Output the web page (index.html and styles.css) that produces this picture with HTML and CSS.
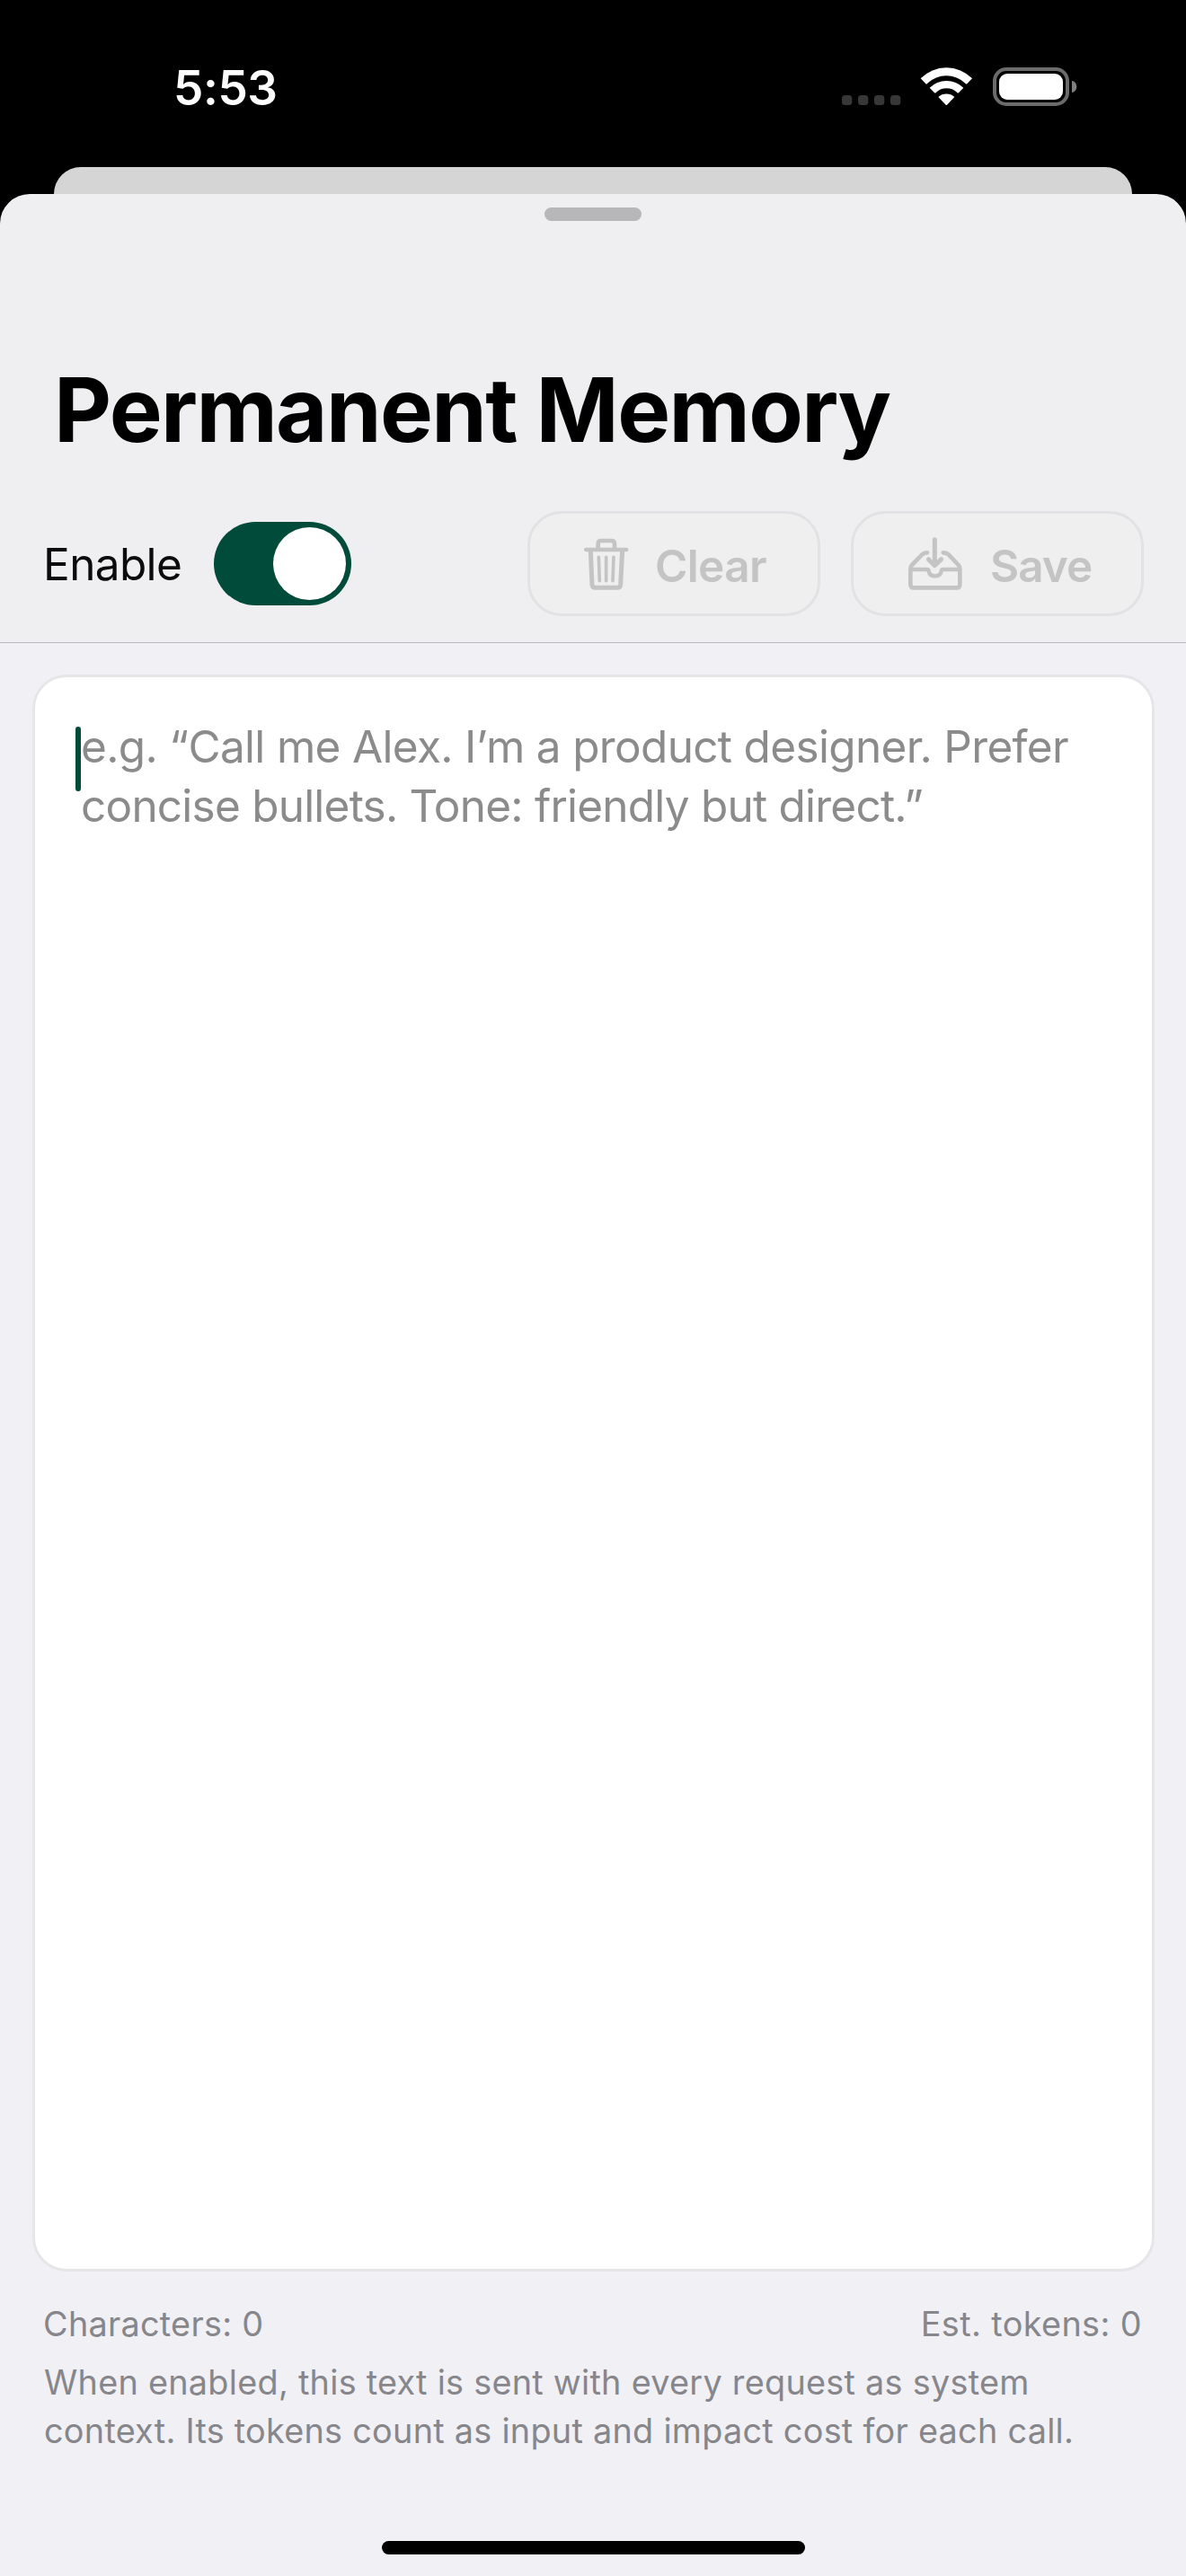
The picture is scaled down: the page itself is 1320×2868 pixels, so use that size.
FILE: index.html
```html
<!DOCTYPE html>
<html lang="en">
<head>
<meta charset="utf-8">
<title>Permanent Memory</title>
<link rel="stylesheet" href="styles.css">
</head>
<body>
<div class="screen">
  <header class="status-bar">
    <span class="time">5:53</span>
    <div class="status-icons">
      <svg class="cellular" width="66" height="45" viewBox="0 0 66 45" fill="#373737">
        <rect x="0" y="32" width="11.3" height="11" rx="3.5"/>
        <rect x="18" y="32" width="11.3" height="11" rx="3.5"/>
        <rect x="36" y="32" width="11.3" height="11" rx="3.5"/>
        <rect x="54" y="32" width="11.3" height="11" rx="3.5"/>
      </svg>
      <svg class="wifi" width="59" height="45" viewBox="372 72 177 135" fill="#fff">
        <path d="M374 112A121 121 0 0 1 546 112L529 130Q526 132 523 128A92 92 0 0 0 397 128Q394 132 391 130Z"/>
        <path d="M404 143A80 80 0 0 1 517 143L501 160Q498 162 495 158A51 51 0 0 0 426 158Q423 162 420 160Z"/>
        <path d="M433 174A40 40 0 0 1 487 174L462 200Q460 202 458 200Z"/>
      </svg>
      <svg class="battery" width="94" height="45" viewBox="0 0 94 45">
        <rect x="2" y="3" width="81" height="39" rx="13" fill="none" stroke="#6b6b6b" stroke-width="4"/>
        <rect x="7" y="8" width="71" height="29" rx="9" fill="#fff"/>
        <path d="M88 15.7Q93.3 17.5 93.3 22.5T88 29.3Z" fill="#808080"/>
      </svg>
    </div>
  </header>

  <div class="back-sheet"></div>

  <main class="sheet">
    <div class="grabber"></div>
    <h1 class="title">Permanent Memory</h1>

    <div class="toolbar">
      <span class="enable-label">Enable</span>
      <div class="toggle"><div class="knob"></div></div>
      <div class="actions">
        <div class="button button-clear">
          <svg class="icon" width="53.3" height="60.7" viewBox="265 142 160 182" fill="none" stroke="currentColor" stroke-linecap="round" stroke-linejoin="round">
            <path d="M277 184H413" stroke-width="13"/>
            <path d="M318 182V164Q318 154 328 154H363Q373 154 373 164V182" stroke-width="14"/>
            <path d="M293 188L298 301Q299 311 309 311H382Q392 311 393 301L399 188" stroke-width="15"/>
            <path d="M320 209L323 288M345 209V288M370 209L367 288" stroke-width="11"/>
          </svg>
          <span class="button-label clear-label">Clear</span>
        </div>
        <div class="button button-save">
          <svg class="icon" width="64" height="62" viewBox="267 140 192 186" fill="none" stroke="currentColor" stroke-linecap="round" stroke-linejoin="round" stroke-width="15">
            <path d="M361 151V236M340 217L361 238L383 217"/>
            <path d="M336 195Q326 194 318 202L285 236Q280 241 280 250V301Q280 312 291 312H434Q445 312 445 301V250Q445 241 440 236L408 202Q400 194 389 195" stroke-width="14"/>
            <path d="M283 251H335Q341 251 341 257Q344 273 362 273T383 257Q383 251 389 251H442" stroke-width="13"/>
          </svg>
          <span class="button-label save-label">Save</span>
        </div>
      </div>
    </div>

    <div class="editor">
      <div class="caret"></div>
      <p class="placeholder">
        <span class="line line-one">e.g. “Call me Alex. I’m a product designer. Prefer</span>
        <span class="line line-two">concise bullets. Tone: friendly but direct.”</span>
      </p>
    </div>

    <footer class="footer">
      <div class="counts">
        <span>Characters: 0</span>
        <span class="tokens">Est. tokens: 0</span>
      </div>
      <p class="note">When enabled, this text is sent with every request as system<br>context. Its tokens count as input and impact cost for each call.</p>
    </footer>

    <div class="home-indicator"></div>
  </main>
</div>
</body>
</html>
```
FILE: styles.css
```css
* { box-sizing: border-box; }

body {
  margin: 0;
  background: #000;
  font-family: Inter, "Liberation Sans", sans-serif;
}

h1, p { margin: 0; }

svg { display: block; flex: none; }

.screen {
  width: 1320px;
  height: 2868px;
  display: flex;
  flex-direction: column;
  overflow: hidden;
  background: #000;
}

/* Status bar */
.status-bar {
  flex: none;
  height: 186px;
  padding: 0 121px 0 193px;
  display: flex;
  justify-content: space-between;
  color: #fff;
}

.time {
  margin-top: 68px;
  font-size: 53px;
  font-weight: 600;
  line-height: 60px;
  letter-spacing: -0.4px;
}

.status-icons {
  display: flex;
  padding-top: 74px;
}

.wifi { margin-left: 21px; }
.battery { margin-left: 22px; }

/* Sheets */
.back-sheet {
  flex: none;
  height: 30px;
  margin: 0 60px;
  border-radius: 30px 30px 0 0;
  background: #d5d5d6;
}

.sheet {
  flex: 1;
  display: flex;
  flex-direction: column;
  border-radius: 33px 33px 0 0;
  background: linear-gradient(#efeff1 499px, #f1f0f5 499px);
}

.grabber {
  flex: none;
  width: 108px;
  height: 15px;
  margin: 15px auto 0;
  border-radius: 8px;
  background: #b7b7b9;
}

.title {
  margin: 150px 0 0 60px;
  font-size: 99px;
  font-weight: 700;
  line-height: 120px;
  letter-spacing: -1.65px;
  color: #000;
}

/* Toolbar */
.toolbar {
  flex: none;
  display: flex;
  align-items: center;
  padding: 53px 47px 29px 48px;
  border-bottom: 1px solid #b9babd;
}

.enable-label {
  font-size: 49.5px;
  line-height: 60px;
  letter-spacing: -0.62px;
  color: #0b0b0c;
}

.toggle {
  width: 153px;
  height: 93px;
  margin-left: 35.7px;
  padding: 6px;
  display: flex;
  justify-content: flex-end;
  border-radius: 47px;
  background: #004b39;
}

.knob {
  width: 81px;
  height: 81px;
  border-radius: 50%;
  background: #fff;
}

.actions {
  display: flex;
  gap: 34px;
  margin-left: auto;
}

.button {
  width: 326px;
  height: 117px;
  display: flex;
  align-items: center;
  border: 3px solid #e2e2e4;
  border-radius: 38px;
  background: #efefef;
  color: #c4c4c4;
}

.button-clear { padding-left: 58.3px; gap: 27.4px; }
.button-save { padding-left: 59px; gap: 29px; }

.icon { margin-top: 1px; }

.button-label {
  padding-top: 4px;
  font-size: 49.5px;
  font-weight: 600;
  line-height: 60px;
}

.clear-label { letter-spacing: -0.65px; }
.save-label { letter-spacing: -0.98px; }

/* Text editor */
.editor {
  flex: none;
  position: relative;
  height: 1778px;
  margin: 35px 35px 0 36px;
  padding: 44px 0 0 51px;
  border: 3px solid #e6e6e9;
  border-radius: 38px;
  background: #fff;
}

.caret {
  position: absolute;
  left: 45px;
  top: 55px;
  width: 6px;
  height: 72px;
  border-radius: 3px;
  background: #004b39;
}

.placeholder {
  font-size: 49.5px;
  line-height: 66px;
  color: #8b8b8b;
}

.line { display: block; white-space: nowrap; }
.line-one { letter-spacing: -0.673px; }
.line-two { letter-spacing: -0.781px; }

/* Footer */
.footer {
  margin-top: 31px;
  padding: 0 49px 0 48px;
  display: flex;
  flex-direction: column;
  gap: 11px;
  font-size: 37.8px;
  line-height: 54px;
  letter-spacing: 0.27px;
  color: #86868b;
}

.counts {
  display: flex;
  justify-content: space-between;
}

.tokens { letter-spacing: 0.39px; }

.note { padding-left: 1px; white-space: nowrap; }

.home-indicator {
  flex: none;
  width: 471px;
  height: 15px;
  margin: auto auto 24px;
  border-radius: 8px;
  background: #000;
}
```
